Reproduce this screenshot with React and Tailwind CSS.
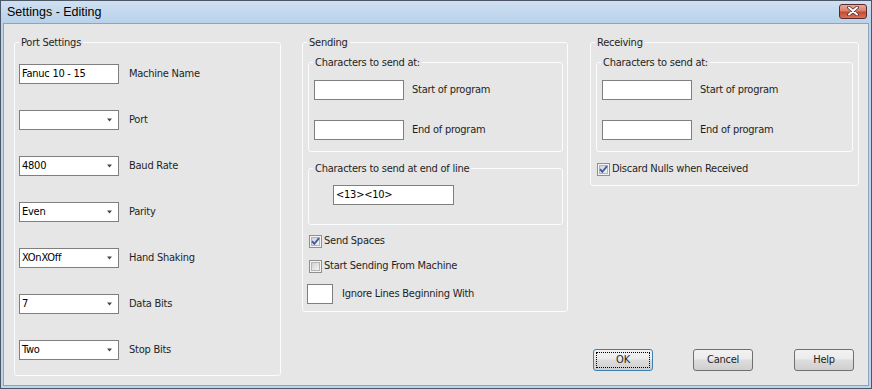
import React from 'react';

function Arrow() {
  return (
    <svg width="7" height="4" viewBox="0 0 7 4" className="shrink-0">
      <path d="M1 0.5h5L3.5 3.5z" fill="#444" />
    </svg>
  );
}

function TextBox({ value = '', w = 'w-[100px]' }) {
  return (
    <div className={`${w} h-[20px] shrink-0 bg-white border border-[#7f7f7f] flex items-center pl-[2px] text-black`}>
      {value}
    </div>
  );
}

function Combo({ value = '' }) {
  return (
    <div className="w-[100px] h-[20px] shrink-0 bg-white border border-[#7f7f7f] flex items-center justify-between pl-[2px] pr-[5px] text-black">
      <span>{value}</span>
      <Arrow />
    </div>
  );
}

function CheckBox({ checked }) {
  return (
    <svg width="13" height="13" viewBox="0 0 13 13" className="shrink-0">
      <defs>
        <linearGradient id="cbg" x1="0" y1="0" x2="1" y2="1">
          <stop offset="0" stopColor="#cfcfcf" />
          <stop offset="1" stopColor="#f6f6f6" />
        </linearGradient>
      </defs>
      <rect x="0.5" y="0.5" width="12" height="12" fill="#f4f4f4" stroke="#8e8f8f" />
      <rect x="2.5" y="2.5" width="8" height="8" fill="url(#cbg)" stroke="#b4b4b4" />
      {checked && (
        <path d="M3 6.2 L5.3 8.8 L10 3.2" fill="none" stroke="#3d5c9e" strokeWidth="1.8" />
      )}
    </svg>
  );
}

function Legend({ children, className = '' }) {
  return <legend className={`px-[2px] leading-[13px] text-[#1f1f1f] ${className}`}>{children}</legend>;
}

function Button({ children, focused }) {
  return (
    <div
      className={`w-[60px] h-[22px] shrink-0 rounded-[3px] border flex items-center justify-center text-[#1f1f1f] bg-[linear-gradient(#f2f2f2_0%,#ebebeb_45%,#dddddd_50%,#cfcfcf_100%)] ${
        focused ? 'border-[#3c7fb1]' : 'border-[#707070]'
      }`}
    >
      {focused ? (
        <div className="w-[54px] h-[16px] border border-dotted border-black flex items-center justify-center">
          {children}
        </div>
      ) : (
        children
      )}
    </div>
  );
}

const portRows = [
  { kind: 'text', value: 'Fanuc 10 - 15', label: 'Machine Name' },
  { kind: 'combo', value: '', label: 'Port' },
  { kind: 'combo', value: '4800', label: 'Baud Rate' },
  { kind: 'combo', value: 'Even', label: 'Parity' },
  { kind: 'combo', value: 'XOnXOff', label: 'Hand Shaking' },
  { kind: 'combo', value: '7', label: 'Data Bits' },
  { kind: 'combo', value: 'Two', label: 'Stop Bits' },
];

function StartEnd() {
  return (
    <div className="flex flex-col gap-[20px]">
      <div className="flex items-center gap-[8px]">
        <TextBox w="w-[90px]" />
        <span>Start of program</span>
      </div>
      <div className="flex items-center gap-[8px]">
        <TextBox w="w-[90px]" />
        <span>End of program</span>
      </div>
    </div>
  );
}

export default function App() {
  return (
    <div className="w-[872px] h-[389px] flex flex-col bg-[#bdd3ea] border border-[#4b5766] font-['DejaVu_Sans_Condensed','Liberation_Sans',Arial,sans-serif] text-[11px] tracking-[-0.25px] text-[#1f1f1f] select-none">
      {/* Title bar */}
      <div className="h-[22px] shrink-0 flex items-center justify-between pl-[6px] pr-[4px] bg-[linear-gradient(#cfe0f1,#b9d1ea)]">
        <span className="text-[12.5px] tracking-normal text-black leading-none font-['Liberation_Sans',Arial,sans-serif]">Settings - Editing</span>
        <div className="w-[28px] h-[15px] mt-[-2px] rounded-[3px] border border-[#5b2a2a] bg-[linear-gradient(#e9a99b_0%,#d9806c_45%,#c64a32_55%,#d5745c_100%)] flex items-center justify-center">
          <svg width="12" height="10" viewBox="0 0 12 10">
            <path d="M2 1.5 L10 8.5 M10 1.5 L2 8.5" stroke="#5a2a2a" strokeWidth="3.6" strokeLinecap="round" />
            <path d="M2 1.5 L10 8.5 M10 1.5 L2 8.5" stroke="#ffffff" strokeWidth="2" strokeLinecap="round" />
          </svg>
        </div>
      </div>

      {/* Client area */}
      <div className="flex-1 mx-[2px] mb-[2px] border border-[#8ea4bd] bg-[#e6e6e6] flex items-stretch pl-[10px] pt-[12px] pb-[9px]">
        {/* Port Settings */}
        <fieldset className="w-[267px] shrink-0 self-start border border-[#fbfcfd] rounded-[3px] pl-[4px] pt-[15px] pb-[15px]">
          <Legend>Port Settings</Legend>
          <div className="flex flex-col gap-[26px]">
            {portRows.map((r) => (
              <div key={r.label} className="flex items-center gap-[10px]">
                {r.kind === 'text' ? <TextBox value={r.value} /> : <Combo value={r.value} />}
                <span>{r.label}</span>
              </div>
            ))}
          </div>
        </fieldset>

        {/* Sending */}
        <fieldset className="w-[266px] ml-[21px] shrink-0 self-start border border-[#fbfcfd] rounded-[3px] px-[4px] pt-[7px] pb-[7px]">
          <Legend>Sending</Legend>
          <fieldset className="ml-[1px] border border-[#fbfcfd] rounded-[3px] pl-[5px] pt-[11px] pb-[11px]">
            <Legend className="ml-[-1px]">Characters to send at:</Legend>
            <StartEnd />
          </fieldset>
          <fieldset className="ml-[1px] mt-[10px] border border-[#fbfcfd] rounded-[3px] pl-[5px] pt-[10px] pb-[19px]">
            <Legend className="ml-[-1px]">Characters to send at end of line</Legend>
            <div className="ml-[19px]">
              <TextBox value="<13><10>" w="w-[121px]" />
            </div>
          </fieldset>
          <div className="mt-[10px] ml-[2px] flex items-center gap-[2px] h-[13px]">
            <CheckBox checked />
            <span>Send Spaces</span>
          </div>
          <div className="mt-[12px] ml-[2px] flex items-center gap-[2px] h-[13px]">
            <CheckBox />
            <span>Start Sending From Machine</span>
          </div>
          <div className="mt-[11px] flex items-center gap-[9px]">
            <TextBox w="w-[26px]" />
            <span>Ignore Lines Beginning With</span>
          </div>
        </fieldset>

        {/* Receiving + buttons */}
        <div className="w-[269px] ml-[22px] shrink-0 flex flex-col">
          <fieldset className="border border-[#fbfcfd] rounded-[3px] px-[4px] pt-[7px] pb-[9px]">
            <Legend>Receiving</Legend>
            <fieldset className="ml-[1px] mr-[1px] border border-[#fbfcfd] rounded-[3px] pl-[5px] pt-[11px] pb-[11px]">
              <Legend className="ml-[-1px]">Characters to send at:</Legend>
              <StartEnd />
            </fieldset>
            <div className="mt-[11px] ml-[2px] flex items-center gap-[2px] h-[13px]">
              <CheckBox checked />
              <span>Discard Nulls when Received</span>
            </div>
          </fieldset>

          <div className="mt-auto mb-[5px] pl-[3px] flex">
            <Button focused>OK</Button>
            <div className="ml-[40px]">
              <Button>Cancel</Button>
            </div>
            <div className="ml-[41px]">
              <Button>Help</Button>
            </div>
          </div>
        </div>
      </div>
    </div>
  );
}
